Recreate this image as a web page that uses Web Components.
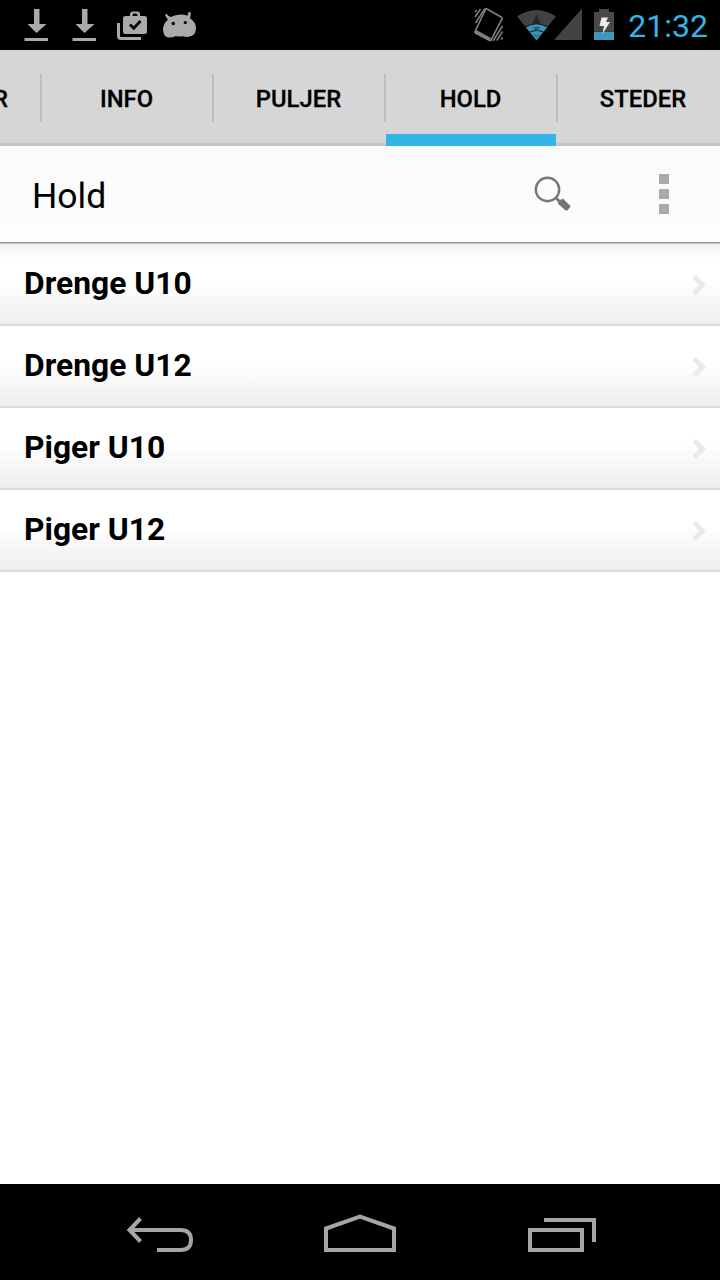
<!DOCTYPE html>
<html lang="da">
<head>
<meta charset="utf-8">
<title>Hold</title>
<style>
html,body{margin:0;height:100%;background:#fff}
body{font-family:Roboto,"Liberation Sans",sans-serif;color:#000;overflow:hidden}
</style>
</head>
<body>
<app-screen>
  <status-bar slot="top" time="21:32"></status-bar>
  <tab-strip slot="top">
    <tab-item cut>R</tab-item>
    <tab-item>INFO</tab-item>
    <tab-item>PULJER</tab-item>
    <tab-item active>HOLD</tab-item>
    <tab-item last>STEDER</tab-item>
  </tab-strip>
  <action-bar slot="top">Hold</action-bar>
  <list-row first>Drenge U10</list-row>
  <list-row>Drenge U12</list-row>
  <list-row>Piger U10</list-row>
  <list-row>Piger U12</list-row>
  <nav-bar slot="bottom"></nav-bar>
</app-screen>
<script>
const define = (name, html) => customElements.define(name, class extends HTMLElement {
  constructor() {
    super();
    this.attachShadow({mode: 'open'}).innerHTML = html;
    const t = this.shadowRoot.querySelector('[data-time]');
    if (t) t.textContent = this.getAttribute('time');
  }
});

define('app-screen', `
<style>
:host{display:flex;flex-direction:column;width:720px;height:1280px;overflow:hidden;background:#fff}
main{flex:1;display:flex;flex-direction:column}
</style>
<slot name="top"></slot><main><slot></slot></main><slot name="bottom"></slot>`);

define('status-bar', `
<style>
:host{display:flex;height:50px;background:#000;color:#33b5e5;box-sizing:border-box;padding:0 12px 0 20px}
svg{display:block;flex:none;height:50px}
.gap{flex:1}
.time{font-size:32px;line-height:53px;white-space:nowrap;flex:none;width:82px;text-align:right}
</style>
<svg width="48" viewBox="20 0 48 50" fill="#aaa"><path d="M34 9h5.500v15h7L36.500 33 27.500 24H34zM24.500 38H48v3H24.500z"/></svg>
<svg width="48" viewBox="20 0 48 50" fill="#aaa"><path d="M34 9h5.500v15h7L36.500 33 27.500 24H34zM24.500 38H48v3H24.500z"/></svg>
<svg width="44" viewBox="116 0 44 50">
  <path fill="#aaa" fill-rule="evenodd" d="M125.500 16H130v-1.500q0-3 3-3h4q3 0 3 3V16h4.500q2.500 0 2.500 2.500v13q0 2.500-2.500 2.500h-19q-2.500 0-2.500-2.500v-13q0-2.500 2.500-2.500zM132.500 16h5v-1q0-1.500-1.500-1.500h-2q-1.500 0-1.500 1.500z"/>
  <path d="M118.500 23v13q0 2.500 2.500 2.500h20" fill="none" stroke="#aaa" stroke-width="3"/>
  <path d="M130 24.500l3.800 3.800 6.700-7.300" fill="none" stroke="#000" stroke-width="2.800"/>
</svg>
<svg width="44" viewBox="160 0 44 50">
  <path fill="#aaa" d="M168 19.500q-2.500-2-2.800-5l1.300-.8q1.500 2.500 4.500 3.300 4-2.500 9.500-2.500 4 0 7 1.200l1-3.700 2.300.5q.2 3-.8 5.700 6 4 6 9.800 0 7-6 8.500-4 1-7-.3-4 .8-7-.2-4 2-8 1.500-5-1.500-5-8 0-5.500 5-10z"/>
  <circle cx="173.300" cy="23.500" r="1.700"/><circle cx="185.300" cy="22.600" r="1.700"/>
</svg>
<span class="gap"></span>
<svg width="42" viewBox="472 0 42 50" fill="none" stroke="#808080">
  <path stroke-width="1.600" d="M487 9l14.500 8.300q1 .6.500 1.600L491 40q-.6 1-1.600.4L475.600 33q-1-.6-.5-1.600L485.500 9.500q.5-1.200 1.500-.5z"/>
  <path stroke-width="3.600" d="M475.500 31.700l14.500 7.800"/>
  <path stroke-width="1.500" d="M485 8.500L475.500 23M480.500 9L475 17M476.500 10l-1.300 2M502.500 26L493 41M502.500 31.500l-5.700 9M502.500 37.500l-1.300 2"/>
</svg>
<svg width="42" viewBox="514 0 42 50">
  <path fill="#424242" d="M517 16.500q19.500-13 39 0L536.500 40z"/>
  <path fill="#3c93b8" d="M525.500 27q11-6.500 22 0L536.500 40.500z"/>
  <path fill="none" stroke="#101e25" stroke-width="1.200" d="M524.500 27.500q12-7.500 24 0M528.800 32.500q7.700-4 15.400 0"/>
  <path fill="#202a2e" d="M536.500 14l4 9h-8z"/><path fill="#245a72" d="M532.500 27h8l-4 4z"/>
  <path fill="#245a72" d="M532 35.500l2.500-1.500 2 2.500 2-2.500 2.500 1.500-2.500-.3-2 2.300-2-2.300z"/>
</svg>
<svg width="70" viewBox="556 0 70 50" overflow="visible">
  <path fill="#424242" d="M582 8.500V40h-28z"/>
  <path fill="#484848" d="M599 9h10v3h5v19h-20V12h5z"/>
  <path fill="#3f97bb" d="M594 31.500h20V40h-20z"/>
  <path fill="#ececec" d="M601.500 17.500h6.500l-2 4.500h4L602.500 34l1.500-8h-4.500z"/>
</svg>
<span class="time" data-time></span>`);

define('tab-strip', `
<style>
:host{display:flex;height:96px;overflow:hidden;background:linear-gradient(#d6d6d6,#d6d6d6 93px,#c5c5c5 93px)}
</style><slot></slot>`);

define('tab-item', `
<style>
:host{display:flex;flex:none;width:172px;height:96px;box-sizing:border-box;font-size:23.800px;font-weight:500;-webkit-text-stroke:.3px #000}
.label{display:flex;width:170px;justify-content:center;align-items:center;box-sizing:border-box;padding:2px 1px 0 0;line-height:28px;border-bottom:0 solid #33b5e5}
.line{width:2px;height:48px;margin-top:24px;background:#bfbfbf}
:host([active]) .label{border-bottom-width:12px;padding-top:14px}
:host([cut]){width:42px}
:host([cut]) .label{width:40px;justify-content:flex-start}
:host([cut]) .text{margin-left:-7px}
:host([last]) .label{padding-right:0}
:host([last]) .line{display:none}
</style>
<div class="label"><span class="text"><slot></slot></span></div><div class="line"></div>`);

define('action-bar', `
<style>
:host{display:flex;align-items:center;height:98px;box-sizing:border-box;padding:0 50px 2px 32px;background:linear-gradient(#fafafa,#fdfdfd 96px,#999 96px,#999 97px,#c4c4c4 97px);font-size:35.500px}
.title{flex:1;line-height:44px;padding-top:3px}
svg{display:block;flex:none}
.search{margin-right:88px}
</style>
<span class="title"><slot></slot></span>
<svg class="search" width="38" height="38" viewBox="533 175 38 38">
  <circle cx="547.500" cy="189.500" r="11.700" fill="none" stroke="#77777a" stroke-width="2.400"/>
  <path d="M555.500 197.500l4 4" stroke="#77777a" stroke-width="3"/>
  <path d="M558 202.500l3.500-3.300q1-.8 2 0l6.300 6q1 1 .2 2.200l-2.400 2.600q-1.300 1-2.500 0l-6.800-6q-.8-.8-.3-1.500z" fill="#737378"/>
</svg>
<svg width="11" height="40" viewBox="0 0 11 40" fill="#aaa"><path d="M0 0h10v10H0zM0 15h10v10H0zM0 30h10v10H0z"/></svg>`);

define('list-row', `
<style>
:host{display:flex;flex:none;align-items:center;justify-content:space-between;height:82px;box-sizing:border-box;padding:0 12px 0 24px;border-bottom:2px solid #dadada;background:linear-gradient(#fff 45%,#eee);font-size:31.800px;font-weight:700}
:host([first]){background:linear-gradient(#f1f1f1,rgba(255,255,255,0) 15px),linear-gradient(#fff 45%,#eee)}
span{line-height:40px;padding-bottom:2px}
svg{display:block;margin-top:1px}
</style>
<span><slot></slot></span>
<svg width="18" height="22" viewBox="0 0 18 22"><path d="M4 2.500l8.500 8.500L4 19.500" fill="none" stroke="#e9eaec" stroke-width="5"/></svg>`);

define('nav-bar', `
<style>
:host{display:flex;height:96px;background:#000;padding-left:124px;box-sizing:border-box}
svg{display:block;flex:none;height:96px;fill:none;stroke:#a5a5a5;stroke-width:4}
.home{margin:0 128px 0 126px}
</style>
<svg width="72" viewBox="124 1184 72 96"><path d="M132 1230h48.500q10.500 0 10.500 10t-10.500 10H157"/><path d="M140.500 1218.500L129.500 1230l11 11.500"/></svg>
<svg class="home" width="76" viewBox="322 1184 76 96"><path d="M326 1250v-21.500l34-11.800 34 11.800V1250z"/></svg>
<svg width="72" viewBox="526 1184 72 96"><path d="M530 1230h52v20h-52zM544 1220h50v22"/></svg>`);
</script>
</body>
</html>
